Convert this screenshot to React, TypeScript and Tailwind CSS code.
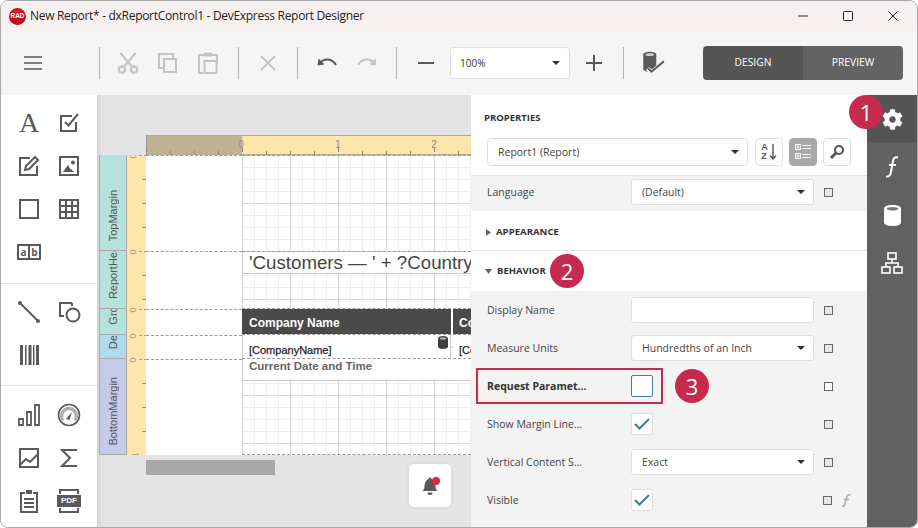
import type { ReactNode } from "react";
import { FaCog } from "react-icons/fa";

const ink = "#5a5a5a";
const faded = "#c4c4c4";

function Icon({ children, size = 24 }: { children: ReactNode; size?: number }) {
  return (
    <svg width={size} height={size} viewBox="0 0 24 24" fill="none">
      {children}
    </svg>
  );
}

function Sep({ className }: { className: string }) {
  return <div className={`h-8 w-px bg-[#b4b4b4] ${className}`} />;
}

function ToolBtn({ children, className = "" }: { children: ReactNode; className?: string }) {
  return <div className={`flex h-10 w-10 items-center justify-center ${className}`}>{children}</div>;
}

function Caret({ className = "" }: { className?: string }) {
  return (
    <svg width="8" height="4" viewBox="0 0 8 4" className={className}>
      <path d="M0 0h8L4 4z" fill="#333" />
    </svg>
  );
}

function Badge({ n, className }: { n: number; className: string }) {
  return (
    <div
      className={`absolute flex h-[34px] w-[34px] items-center justify-center rounded-full bg-[#c62a4e] text-[22px] leading-none text-white ${className}`}
    >
      {n}
    </div>
  );
}

const toolboxTop: ReactNode[] = [
  <span key="a" className="font-['Liberation_Serif',serif] text-[28px] leading-none text-[#5a5a5a]">A</span>,
  <Icon key="check">
    <path d="M19 11v9H4V5h11" stroke={ink} strokeWidth="2" />
    <path d="M8 11l3.500 3.500L21 3" stroke={ink} strokeWidth="2" />
  </Icon>,
  <Icon key="edit">
    <path d="M13 4H3v17h17v-9" stroke={ink} strokeWidth="2" />
    <path d="M8 16l1-4 9-9 3 3-9 9z" stroke={ink} strokeWidth="2" />
  </Icon>,
  <Icon key="pic">
    <rect x="3" y="3" width="18" height="18" stroke={ink} strokeWidth="2" />
    <path d="M6 18l5-7 4 7z" fill={ink} />
    <path d="M11 18l3-3 3 3z" fill={ink} />
    <circle cx="16" cy="8.500" r="2" fill={ink} />
  </Icon>,
  <Icon key="rect">
    <rect x="3" y="3" width="18" height="18" stroke={ink} strokeWidth="2" />
  </Icon>,
  <Icon key="table">
    <rect x="3" y="3" width="18" height="18" stroke={ink} strokeWidth="2" />
    <path d="M9 3v18M15 3v18M3 9h18M3 15h18" stroke={ink} strokeWidth="2" />
  </Icon>,
  <div key="ab" className="flex h-[16px] w-[24px] border-2 border-[#5a5a5a] text-[10px] font-bold leading-[12px] text-[#5a5a5a]">
    <span className="flex-1 text-center">a</span>
    <span className="flex-1 border-l-2 border-[#5a5a5a] text-center">b</span>
  </div>,
];

const toolboxMid: ReactNode[] = [
  <Icon key="line">
    <path d="M3 3l18 18" stroke={ink} strokeWidth="2" />
    <circle cx="3" cy="3" r="2" fill={ink} />
    <circle cx="21" cy="21" r="2" fill={ink} />
  </Icon>,
  <Icon key="shape">
    <path d="M15 3H3v13h4" stroke={ink} strokeWidth="2" />
    <path d="M15 3v3" stroke={ink} strokeWidth="2" />
    <circle cx="16" cy="15" r="6.500" stroke={ink} strokeWidth="2" />
  </Icon>,
  <Icon key="barcode">
    <path d="M3 2h3v20H3zM8 2h1.500v20H8zM11.500 2h3v20h-3zM16 2h1.500v20H16zM19 2h3v20h-3z" fill={ink} />
  </Icon>,
];

const toolboxBottom: ReactNode[] = [
  <Icon key="bars">
    <path d="M2 16h4v6H2zM10 9h4v13h-4zM18 2h4v20h-4z" stroke={ink} strokeWidth="1.800" />
  </Icon>,
  <Icon key="gauge">
    <circle cx="12" cy="12" r="10.500" stroke={ink} strokeWidth="1.600" />
    <path d="M6 17.500a7.500 7.500 0 1 1 12 0" stroke="#b0b0b0" strokeWidth="3.500" />
    <path d="M9 16l6-7-2.500 8z" fill={ink} />
  </Icon>,
  <Icon key="area">
    <rect x="3" y="3" width="18" height="18" stroke={ink} strokeWidth="2" />
    <path d="M3 19l6-6 4 3 8-8" stroke={ink} strokeWidth="2" />
  </Icon>,
  <Icon key="sigma">
    <path d="M20 4H5l8 8-8 8h15" stroke={ink} strokeWidth="2" />
  </Icon>,
  <Icon key="clip">
    <path d="M8 4H4v19h16V4h-4" stroke={ink} strokeWidth="2" />
    <rect x="9" y="1" width="6" height="4" fill={ink} />
    <path d="M7 10h10M7 14h10M7 18h10" stroke={ink} strokeWidth="2" />
  </Icon>,
  <div key="pdf" className="flex h-[24px] w-[24px] flex-col items-center justify-between">
    <div className="h-[5px] w-[20px] border-2 border-b-0 border-[#5a5a5a]" />
    <div className="flex h-[12px] w-[24px] items-center justify-center bg-[#5a5a5a] font-['Liberation_Sans',sans-serif] text-[8px] font-bold leading-none text-white">PDF</div>
    <div className="h-[5px] w-[20px] border-2 border-t-0 border-[#5a5a5a]" />
  </div>,
];

function ToolboxSection({ items, className }: { items: ReactNode[]; className: string }) {
  return (
    <div className={`grid grid-cols-[40px_40px] auto-rows-[43px] pl-[8px] ${className}`}>
      {items.map((item, i) => (
        <div key={i} className="flex items-center justify-center">
          {item}
        </div>
      ))}
    </div>
  );
}

const bands = [
  { name: "TopMargin", h: "h-[96px]", color: "bg-[#b5e2dc]" },
  { name: "ReportHeader", h: "h-[58px]", color: "bg-[#b5e2dc]" },
  { name: "GroupHeader", h: "h-[26px]", color: "bg-[#b5e2dc]" },
  { name: "Detail", h: "h-[24px]", color: "bg-[#b0dbee]" },
  { name: "BottomMargin", h: "h-[96px]", color: "bg-[#c5cbe8]" },
];

function TopRuler() {
  const ticks = Array.from({ length: 14 }, (_, i) => i * 24);
  return (
    <svg width="325" height="20" className="block">
      <rect x="0" y="0" width="96" height="20" fill="#bfb192" />
      <rect x="96" y="0" width="229" height="20" fill="#fde5ab" />
      <path d="M0 .5h325M0 19.500h325" stroke="#b5ab90" />
      <path d="M.5 0v20" stroke="#a09880" />
      {ticks.map((x) => (
        <path key={x} d={`M${x + 0.5} ${(x - 96) % 96 === 0 ? 13 : 16}v4`} stroke="#8f8a78" />
      ))}
      <text x="95" y="13" textAnchor="middle" fontSize="10" fill="#8a8a80" fontFamily="Liberation Sans">0</text>
      <text x="192" y="13" textAnchor="middle" fontSize="10" fill="#8a8a80" fontFamily="Liberation Sans">1</text>
      <text x="288" y="13" textAnchor="middle" fontSize="10" fill="#8a8a80" fontFamily="Liberation Sans">2</text>
    </svg>
  );
}

function SideRuler() {
  const marks = [0, 96, 154, 180, 204];
  const ticks = [24, 48, 72, 120, 144, 228, 252, 276];
  return (
    <svg width="20" height="300" className="block">
      <rect width="20" height="300" fill="#fde5ab" />
      <path d="M19.500 0v300" stroke="#bdb394" />
      {ticks.map((y) => (
        <path key={y} d={`M15 ${y + 0.5}h5`} stroke="#8f8a78" />
      ))}
      {marks.map((y) => (
        <g key={y}>
          <path d={`M12 ${y + 0.5}h8`} stroke="#a8a08a" strokeDasharray="3 2" />
          <text x="0" y="0" fontSize="9" fill="#a09a88" fontFamily="Liberation Sans" textAnchor="middle" transform={`translate(9 ${y + 1}) rotate(-90)`}>0</text>
        </g>
      ))}
      <text x="0" y="0" fontSize="9" fill="#8a8578" fontFamily="Liberation Sans" textAnchor="middle" transform="translate(11 300) rotate(-90)">1</text>
    </svg>
  );
}

function DbIcon({ className = "" }: { className?: string }) {
  return (
    <svg width="10" height="13" viewBox="0 0 10 13" className={className}>
      <path d="M0 2.500C0 1 2 0 5 0s5 1 5 2.500v8C10 12 8 13 5 13s-5-1-5-2.500z" fill="#3f3f3f" />
      <ellipse cx="5" cy="2.600" rx="3.300" ry="1" fill="#bdbdbd" />
    </svg>
  );
}

function Canvas() {
  const dash = "border-t border-dashed border-[#999]";
  return (
    <div className="relative flex w-[374px] shrink-0 flex-col overflow-hidden bg-[#e4e4e4] pl-[2px] pt-[40px] shadow-[inset_4px_0_4px_-3px_rgba(0,0,0,0.12)]">
      <div className="ml-[47px]">
        <TopRuler />
      </div>
      <div className="flex h-[300px]">
        <div className="flex w-[28px] shrink-0 flex-col border-l border-[#a8a8a8]">
          {bands.map((b) => (
            <div
              key={b.name}
              className={`flex ${b.h} ${b.color} flex-col items-center justify-end overflow-hidden border-b border-r border-[#a8a8a8] pb-[9px]`}
            >
              <span className="shrink-0 rotate-180 whitespace-nowrap font-['Liberation_Sans',sans-serif] text-[11px] leading-[12px] text-[#555] [writing-mode:vertical-rl]">
                {b.name}
              </span>
            </div>
          ))}
        </div>
        <SideRuler />
        <div className="flex w-[96px] shrink-0 flex-col bg-white">
          {bands.map((b) => (
            <div key={b.name} className={`${b.h} ${dash}`} />
          ))}
        </div>
        <div className="flex w-[229px] shrink-0 flex-col overflow-hidden border-b border-dashed border-[#999] bg-white bg-[linear-gradient(to_right,#d6d6d6_1px,transparent_1px),linear-gradient(to_bottom,#d6d6d6_1px,transparent_1px),linear-gradient(to_right,#eeeeee_1px,transparent_1px),linear-gradient(to_bottom,#eeeeee_1px,transparent_1px)] bg-[size:48px_48px,48px_48px,12px_12px,12px_12px] font-['Liberation_Sans',sans-serif]">
          <div className={`h-[96px] ${dash}`} />
          <div className={`h-[58px] ${dash}`}>
            <div className="h-[22px] whitespace-nowrap border-b border-l border-[#c8c8c8] bg-white pl-[6px] pt-[1px] text-[18.700px] leading-[20px] text-[#454545]">
              'Customers — ' + ?Country
            </div>
          </div>
          <div className={`flex h-[26px] gap-[2px] ${dash}`}>
            <div className="flex h-[25px] w-[209px] shrink-0 items-center bg-[#4a4a4a] pl-[7px] pt-[3px] text-[12px] font-bold text-white">
              Company Name
            </div>
            <div className="flex h-[25px] flex-1 items-center bg-[#4a4a4a] pl-[6px] pt-[3px] text-[12px] font-bold text-white">
              Country
            </div>
          </div>
          <div className={`flex h-[24px] gap-[2px] ${dash}`}>
            <div className="relative flex h-[23px] w-[209px] shrink-0 items-center border-l border-r border-[#c8c8c8] bg-white pl-[6px] pt-[6px] text-[11px] text-[#222] [-webkit-text-stroke:0.25px_#222]">
              [CompanyName]
              <DbIcon className="absolute right-[2px] top-[1px]" />
            </div>
            <div className="flex h-[23px] flex-1 items-center bg-white pl-[6px] pt-[6px] text-[11px] text-[#222] [-webkit-text-stroke:0.25px_#222]">
              [Country]
            </div>
          </div>
          <div className={`h-[96px] ${dash}`}>
            <div className="h-[22px] w-[229px] border-b border-l border-[#c8c8c8] bg-white pl-[6px] pt-[1px] text-[11.500px] font-bold leading-[12px] text-[#666]">
              Current Date and Time
            </div>
          </div>
        </div>
      </div>
      <div className="ml-[47px] mt-[5px] h-[15px] w-[129px] bg-[#a8a8a8]" />
      <div className="absolute left-[312px] top-[369px] flex h-[43px] w-[42px] items-center justify-center rounded-[5px] bg-white shadow-[0_0_4px_rgba(0,0,0,0.08)]">
        <svg width="22" height="22" viewBox="0 0 22 22">
          <path d="M11 2.500a1.500 1.500 0 0 1 1.500 1.400C15.500 5 16.500 8 16.500 11c0 2.200.6 3.500 2 5h-15c1.400-1.500 2-2.800 2-5 0-3 1-6 4-7.100A1.500 1.500 0 0 1 11 2.500z" fill="#5a5a5a" />
          <path d="M8.500 17.500h5a2.500 2.500 0 0 1-5 0z" fill="#5a5a5a" />
          <circle cx="17" cy="6" r="4" fill="#e0243f" />
        </svg>
      </div>
    </div>
  );
}

function SmallSquare({ white = false }: { white?: boolean }) {
  return <div className={`h-[9px] w-[9px] border border-[#666] ${white ? "bg-white" : "bg-[#e8e8e8]"}`} />;
}

function FieldBox({ children, caret = false }: { children?: ReactNode; caret?: boolean }) {
  return (
    <div className="flex h-[26px] w-[183px] items-center justify-between rounded-[3px] border border-[#dedede] bg-white pl-[10px] pr-[8px] text-[#444]">
      <span className="pt-[2px]">{children}</span>
      {caret && <Caret />}
    </div>
  );
}

function CheckBox({ checked = false, focus = false }: { checked?: boolean; focus?: boolean }) {
  return (
    <div
      className={`flex h-[22px] w-[22px] items-center justify-center rounded-[2px] border bg-white ${focus ? "border-[#3d7ab5]" : "border-[#dedede]"}`}
    >
      {checked && (
        <svg width="16" height="12" viewBox="0 0 16 12">
          <path d="M1 6l4.500 4.500L15 1" fill="none" stroke="#3d7ab5" strokeWidth="2" />
        </svg>
      )}
    </div>
  );
}

function PropRow({ label, bold, children, side }: { label: string; bold?: boolean; children: ReactNode; side?: ReactNode }) {
  return (
    <div className="flex h-[38px] items-center pl-[16px]">
      <div className={`w-[144px] shrink-0 pt-[2px] ${bold ? "font-bold text-[#333]" : "text-[#444]"}`}>{label}</div>
      <div className="w-[183px] shrink-0">{children}</div>
      <div className="ml-[10px] flex items-center">{side ?? <SmallSquare />}</div>
    </div>
  );
}

function IconBtn({ children, active = false }: { children: ReactNode; active?: boolean }) {
  return (
    <div
      className={`flex h-[28px] w-[28px] items-center justify-center rounded-[4px] border ${active ? "border-[#a8a8a8] bg-[#a8a8a8]" : "border-[#dedede] bg-white"}`}
    >
      {children}
    </div>
  );
}

function Properties() {
  return (
    <div className="relative flex w-[396px] shrink-0 flex-col bg-white text-[10.500px]">
      <div className="flex h-[43px] items-center pl-[13px] pt-[3px] text-[9.500px] font-bold text-[#333]">PROPERTIES</div>
      <div className="flex items-center pl-[16px]">
        <div className="flex h-[28px] w-[261px] items-center justify-between rounded-[4px] border border-[#dedede] pl-[10px] pr-[8px] text-[#444]">
          <span className="pt-[2px]">Report1 (Report)</span>
          <Caret />
        </div>
        <div className="ml-[7px] flex gap-[6px]">
          <IconBtn>
            <div className="flex items-center gap-[1px]">
              <div className="flex flex-col font-['Liberation_Sans',sans-serif] text-[9px] font-bold leading-[9px] text-[#555]">
                <span>A</span>
                <span>Z</span>
              </div>
              <svg width="8" height="17" viewBox="0 0 8 17">
                <path d="M4 0v15M1 11.500L4 15l3-3.500" fill="none" stroke="#555" strokeWidth="1.400" />
              </svg>
            </div>
          </IconBtn>
          <IconBtn active>
            <svg width="16" height="16" viewBox="0 0 16 16" fill="none" stroke="#fff">
              <path d="M.5 .5h5v5h-5zM.5 9.500h5v5h-5zM1.500 3h3M3 1.500v3M1.500 12h3M3 10.500v3M7.500 1.500H16M7.500 4.500H16M7.500 10.500H16M7.500 13.500H16" />
            </svg>
          </IconBtn>
          <IconBtn>
            <svg width="16" height="16" viewBox="0 0 16 16" fill="none" stroke="#555">
              <circle cx="10" cy="6" r="4" strokeWidth="2.200" />
              <path d="M7 9l-5 5" strokeWidth="3" />
            </svg>
          </IconBtn>
        </div>
      </div>
      <div className="mt-[9px] flex h-[36px] items-center border-t border-[#e6e6e6] bg-[#f3f3f3] pb-[3px] pl-[16px]">
        <div className="w-[144px] shrink-0 pt-[2px] text-[#444]">Language</div>
        <FieldBox caret>(Default)</FieldBox>
        <div className="ml-[10px]">
          <SmallSquare />
        </div>
      </div>
      <div className="flex h-[40px] items-center border-b border-[#e6e6e6] pl-[15px] pt-[3px] text-[9.600px] font-bold text-[#333]">
        <svg width="5" height="7" viewBox="0 0 5 7" className="mr-[5px]">
          <path d="M0 0l5 3.500L0 7z" fill="#666" />
        </svg>
        APPEARANCE
      </div>
      <div className="flex h-[40px] items-center pl-[14px] text-[9.500px] font-bold text-[#333]">
        <svg width="7" height="5" viewBox="0 0 7 5" className="mr-[5px]">
          <path d="M0 0h7L3.500 5z" fill="#666" />
        </svg>
        BEHAVIOR
      </div>
      <div className="relative flex-1 bg-[#f3f3f3]">
        <PropRow label="Display Name">
          <FieldBox />
        </PropRow>
        <PropRow label="Measure Units">
          <FieldBox caret>Hundredths of an Inch</FieldBox>
        </PropRow>
        <PropRow label="Request Paramet..." bold side={<SmallSquare white />}>
          <CheckBox focus />
        </PropRow>
        <PropRow label="Show Margin Line...">
          <CheckBox checked />
        </PropRow>
        <PropRow label="Vertical Content S...">
          <FieldBox caret>Exact</FieldBox>
        </PropRow>
        <PropRow
          label="Visible"
          side={
            <div className="-ml-[1px] flex items-center gap-[10px]">
              <SmallSquare />
              <svg width="9" height="13" viewBox="0 0 9 13">
                <path d="M8.500 1C6 .2 5 1.500 4.500 3.500L3 10c-.3 1.500-1.300 2.300-3 2M2 5.500h5" fill="none" stroke="#b5b5b5" strokeWidth="1.800" />
              </svg>
            </div>
          }
        >
          <CheckBox checked />
        </PropRow>
        <div className="absolute left-[5px] top-[77px] h-[36px] w-[187px] border-2 border-[#c62a4e]" />
      </div>
      <Badge n={2} className="left-[79px] top-[159px]" />
      <Badge n={3} className="left-[204px] top-[274px]" />
    </div>
  );
}

function SideTab({ children, active = false }: { children: ReactNode; active?: boolean }) {
  return (
    <div className={`flex h-[48px] items-center justify-center ${active ? "bg-[#555]" : ""}`}>{children}</div>
  );
}

export default function App() {
  return (
    <div className="flex h-[528px] w-[918px] flex-col overflow-hidden rounded-t-[8px] rounded-b-[8px] border border-[#aaa] font-['Open_Sans',sans-serif]">
      <div className="flex h-[30px] shrink-0 items-center bg-[#f7f0f1] pl-[8px] text-[12px] tracking-[-0.3px] text-[#222]">
        <div className="flex h-[17px] w-[17px] items-center justify-center rounded-full bg-[radial-gradient(circle_at_50%_30%,#e0202a,#a00010)] font-['Liberation_Sans',sans-serif] text-[6.500px] font-bold leading-none tracking-normal text-white">
          RAD
        </div>
        <span className="ml-[4px] whitespace-nowrap">New Report* - dxReportControl1 - DevExpress Report Designer</span>
        <div className="ml-auto flex items-center">
          <svg width="10" height="2" className="mr-[35px]">
            <path d="M0 1h10" stroke="#222" />
          </svg>
          <svg width="10" height="10" className="mr-[35px]">
            <rect x=".5" y=".5" width="9" height="9" rx="1" fill="none" stroke="#222" />
          </svg>
          <svg width="10" height="10" className="mr-[19px]">
            <path d="M.5 .5l9 9M9.500 .5l-9 9" stroke="#222" />
          </svg>
        </div>
      </div>

      <div className="flex h-[64px] shrink-0 items-center bg-[#f5f5f5] pl-[12px]">
        <ToolBtn>
          <svg width="18" height="14" viewBox="0 0 18 14">
            <path d="M0 1h18M0 7h18M0 13h18" stroke={ink} strokeWidth="1.600" />
          </svg>
        </ToolBtn>
        <Sep className="ml-[46px]" />
        <ToolBtn className="ml-[8px]">
          <Icon>
            <circle cx="6" cy="18.500" r="3.200" stroke={faded} strokeWidth="2.200" />
            <circle cx="18" cy="18.500" r="3.200" stroke={faded} strokeWidth="2.200" />
            <path d="M8 15.500L19.500 2M16 15.500L4.500 2" stroke={faded} strokeWidth="2.200" />
          </Icon>
        </ToolBtn>
        <ToolBtn>
          <Icon>
            <path d="M7 17H3V3h14v4" stroke={faded} strokeWidth="2" />
            <rect x="8" y="8" width="12" height="13" stroke={faded} strokeWidth="2" />
          </Icon>
        </ToolBtn>
        <ToolBtn>
          <Icon>
            <path d="M8 4H3v18h4M16 4h5v8" stroke={faded} strokeWidth="2" />
            <rect x="8" y="1.500" width="8" height="4" fill={faded} />
            <rect x="8.500" y="10" width="12" height="12" stroke={faded} strokeWidth="2" />
          </Icon>
        </ToolBtn>
        <Sep className="ml-[10px]" />
        <ToolBtn className="ml-[9px]">
          <svg width="16" height="16" viewBox="0 0 16 16">
            <path d="M1 1l14 14M15 1L1 15" stroke={faded} strokeWidth="1.800" />
          </svg>
        </ToolBtn>
        <Sep className="ml-[9px]" />
        <ToolBtn className="ml-[9px]">
          <Icon>
            <path d="M4 8l-1 6 6-1" fill={ink} stroke={ink} />
            <path d="M5 12c4-5 12-5 16 2" stroke={ink} strokeWidth="2" />
          </Icon>
        </ToolBtn>
        <ToolBtn>
          <Icon>
            <path d="M20 8l1 6-6-1" fill={faded} stroke={faded} />
            <path d="M19 12c-4-5-12-5-16 2" stroke={faded} strokeWidth="2" />
          </Icon>
        </ToolBtn>
        <Sep className="ml-[9px]" />
        <ToolBtn className="ml-[9px]">
          <svg width="16" height="2" viewBox="0 0 16 2">
            <path d="M0 1h16" stroke={ink} strokeWidth="2" />
          </svg>
        </ToolBtn>
        <div className="ml-[4px] flex h-[32px] w-[120px] items-center justify-between rounded-[4px] border border-[#dedede] bg-white pl-[9px] pr-[9px] text-[10px] text-[#333]">
          <span>100%</span>
          <Caret />
        </div>
        <ToolBtn className="ml-[4px]">
          <svg width="16" height="16" viewBox="0 0 16 16">
            <path d="M0 8h16M8 0v16" stroke={ink} strokeWidth="2" />
          </svg>
        </ToolBtn>
        <Sep className="ml-[9px]" />
        <ToolBtn className="ml-[9px]">
          <Icon size={26}>
            <path d="M3 4c0-1.500 2.500-2.500 6-2.500S15 2.500 15 4v10l-5 6H9c-3.500 0-6-1-6-2.500z" fill={ink} />
            <ellipse cx="9" cy="4.300" rx="4" ry="1.200" fill="#d0d0d0" />
            <path d="M7 17l3.500 3.500L23 11" stroke="#f5f5f5" strokeWidth="4" />
            <path d="M7.500 17l3 3L22 10.500" stroke={ink} strokeWidth="1.800" />
          </Icon>
        </ToolBtn>
        <div className="ml-[30px] flex h-[34px] w-[200px] overflow-hidden rounded-[4px] text-[10.300px] text-white">
          <div className="flex flex-1 items-center justify-center bg-[#555]">DESIGN</div>
          <div className="flex flex-1 items-center justify-center bg-[#636363]">PREVIEW</div>
        </div>
      </div>

      <div className="relative flex min-h-0 flex-1">
        <div className="flex w-[96px] shrink-0 flex-col bg-white">
          <ToolboxSection items={toolboxTop} className="h-[189px] border-b border-[#e4e4e4] pt-[6px]" />
          <ToolboxSection items={toolboxMid} className="h-[102px] border-b border-[#e4e4e4] pt-[6px]" />
          <ToolboxSection items={toolboxBottom} className="pt-[7px]" />
        </div>
        <Canvas />
        <Properties />
        <div className="flex flex-1 flex-col bg-[#616161]">
          <SideTab active>
            <FaCog size={21} color="#fff" />
          </SideTab>
          <SideTab>
            <svg width="14" height="22" viewBox="0 0 14 22">
              <path d="M13 1.500C10 .5 8.500 2 8 5L6 16c-.5 3.500-2.500 5-5 4.500M4 9h7" fill="none" stroke="#fff" strokeWidth="2" />
            </svg>
          </SideTab>
          <SideTab>
            <svg width="17" height="21" viewBox="0 0 17 21">
              <path d="M0 3.500C0 1.500 3.500 0 8.500 0S17 1.500 17 3.500v14c0 2-3.500 3.500-8.500 3.500S0 19.500 0 17.500z" fill="#fff" />
              <ellipse cx="8.500" cy="3.700" rx="5.700" ry="1.700" fill="#777" />
            </svg>
          </SideTab>
          <SideTab>
            <svg width="22" height="22" viewBox="0 0 22 22" fill="none" stroke="#fff" strokeWidth="1.600">
              <rect x="7" y="1" width="8" height="6" />
              <rect x="1" y="15" width="8" height="6" />
              <rect x="13" y="15" width="8" height="6" />
              <path d="M11 7v4M5 15v-4h12v4" />
            </svg>
          </SideTab>
        </div>
        <Badge n={1} className="left-[848px] top-0" />
      </div>
    </div>
  );
}
